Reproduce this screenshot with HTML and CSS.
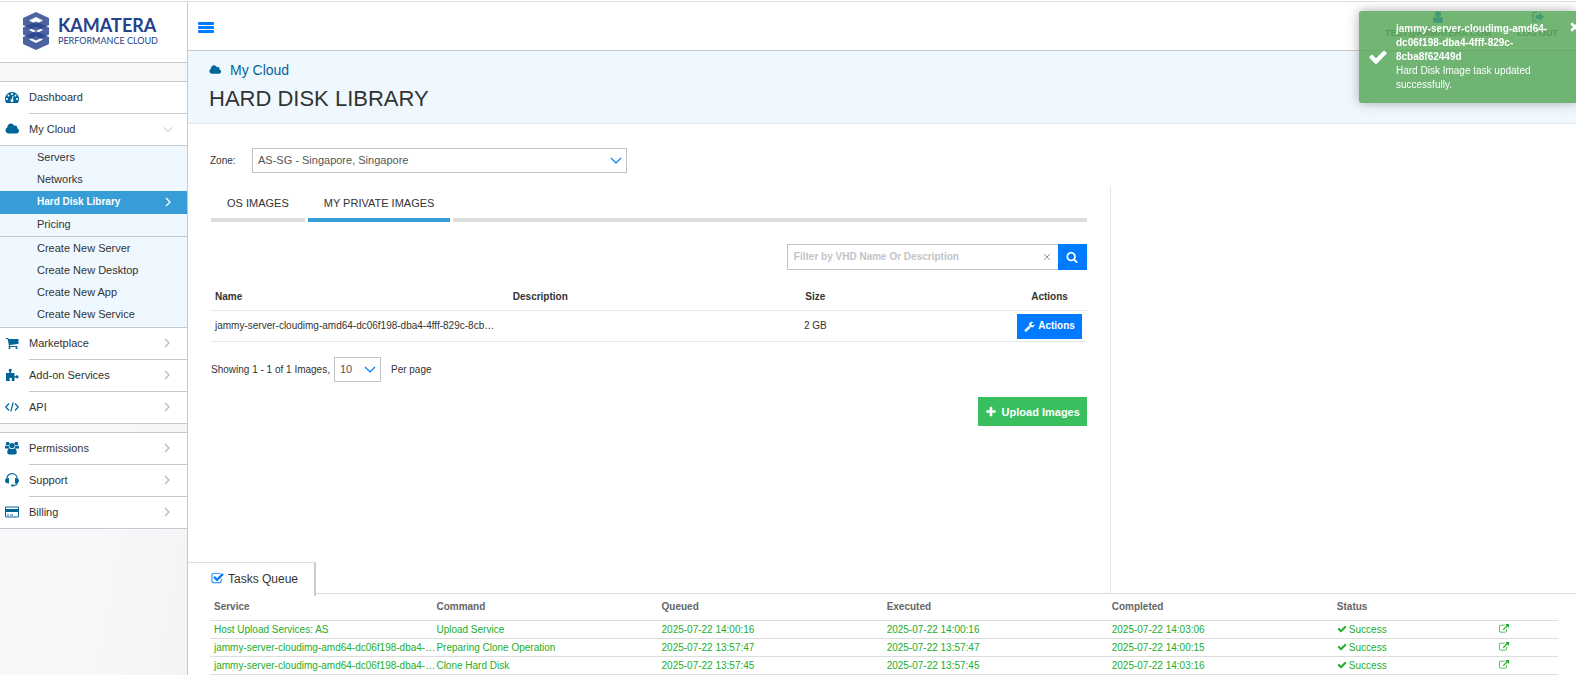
FILE: index.html
```
<!doctype html>
<html lang="en">

<head>
	<meta charset="utf-8">
	<title>Hard Disk Library</title>
	<meta name="viewport" content="width=device-width, initial-scale=1">
	<link rel="stylesheet" href="styles.css">
</head>

<body>
	<!-- shared icons -->
	<svg class="sprite" aria-hidden="true">
		<symbol id="i-cloud" viewBox="0 0 1984 1792"><path d="M1984 1152q0 159-112.500 271.500t-271.500 112.500h-1088q-185 0-316.500-131.500t-131.500-316.500q0-132 71-241.500t187-163.500q-2-28-2-43 0-212 150-362t362-150q158 0 286.500 88t187.500 230q70-62 166-62 106 0 181 75t75 181q0 75-41 138 129 30 213 134.500t84 239.500z"/></symbol>
		<symbol id="i-check" viewBox="0 0 1792 1792"><path d="M1671 566q0 40-28 68l-724 724-136 136q-28 28-68 28t-68-28l-136-136-362-362q-28-28-28-68t28-68l136-136q28-28 68-28t68 28l294 295 656-657q28-28 68-28t68 28l136 136q28 28 28 68z"/></symbol>
		<symbol id="i-external" viewBox="0 0 1792 1792"><path d="M1408 928v320q0 119-84.500 203.500t-203.500 84.500h-832q-119 0-203.500-84.500t-84.500-203.500v-832q0-119 84.500-203.500t203.500-84.500h704q14 0 23 9t9 23v64q0 14-9 23t-23 9h-704q-66 0-113 47t-47 113v832q0 66 47 113t113 47h832q66 0 113-47t47-113v-320q0-14 9-23t23-9h64q14 0 23 9t9 23zm384-864v512q0 26-19 45t-45 19-45-19l-176-176-652 652q-10 10-23 10t-23-10l-114-114q-10-10-10-23t10-23l652-652-176-176q-19-19-19-45t19-45 45-19h512q26 0 45 19t19 45z"/></symbol>
		<symbol id="i-right" viewBox="0 0 6 10"><path d="M1 1l4 4-4 4" fill="none" stroke="currentColor" stroke-width="1.300"/></symbol>
		<symbol id="i-down" viewBox="0 0 12 7"><path d="M1 1l5 5 5-5" fill="none" stroke="currentColor" stroke-width="1.200"/></symbol>
	</svg>

	<div class="app">
		<aside class="sidebar">
			<a class="logo" href="#">
				<svg width="26" height="38" viewBox="0 0 26 38" fill="#24418c" fill-rule="evenodd" fill-opacity=".82">
					<path d="M13 0l13 6v7l-13 6L0 13V6zM13 5L6 8.500l7 3.500 7-3.500z"/>
					<path d="M13 9.500l13 6v7l-13 6-13-6v-7zM13 14.500L6 18l7 3.500 7-3.500z"/>
					<path d="M13 19l13 6v7l-13 6-13-6v-7zM13 24l-7 3.500 7 3.500 7-3.500z"/>
				</svg>
				<span class="logo-text">
					<span class="logo-name">KAMATERA</span>
					<span class="logo-sub">PERFORMANCE CLOUD</span>
				</span>
			</a>

			<nav class="menu">
				<ul class="menu-group">
					<li><a href="#">
						<svg class="icon" viewBox="0 0 1792 1792"><path d="M384 1152q0-53-37.500-90.500t-90.500-37.500-90.500 37.500-37.500 90.500 37.500 90.500 90.500 37.500 90.500-37.500 37.500-90.500zm192-448q0-53-37.500-90.500t-90.500-37.500-90.500 37.500-37.500 90.500 37.500 90.500 90.500 37.500 90.500-37.500 37.500-90.500zm428 481l101-382q6-26-7.500-48.500t-38.500-29.500-48 6.500-30 39.500l-101 382q-60 5-107 43.500t-63 98.500q-20 77 20 146t117 89 146-20 89-117q16-60-6-117t-72-91zm660-33q0-53-37.500-90.500t-90.500-37.500-90.500 37.500-37.500 90.500 37.500 90.500 90.500 37.500 90.500-37.500 37.500-90.500zm-640-640q0-53-37.500-90.500t-90.500-37.500-90.500 37.500-37.500 90.500 37.500 90.500 90.500 37.500 90.500-37.500 37.500-90.500zm448 192q0-53-37.500-90.500t-90.500-37.500-90.500 37.500-37.500 90.500 37.500 90.500 90.500 37.500 90.500-37.500 37.500-90.500zm320 448q0 261-141 483-19 29-54 29h-1402q-35 0-54-29-141-221-141-483 0-182 71-348t191-286 286-191 348-71 348 71 286 191 191 286 71 348z"/></svg>
						<span class="menu-label">Dashboard</span>
					</a></li>
					<li><a href="#">
						<svg class="icon"><use href="#i-cloud"/></svg>
						<span class="menu-label">My Cloud <svg class="chev-down"><use href="#i-down"/></svg></span>
					</a></li>
				</ul>
				<ul class="submenu">
					<li><a href="#">Servers</a></li>
					<li><a href="#">Networks</a></li>
					<li><a class="active" href="#">Hard Disk Library <svg class="chev"><use href="#i-right"/></svg></a></li>
					<li><a href="#">Pricing</a></li>
				</ul>
				<ul class="submenu submenu-last">
					<li><a href="#">Create New Server</a></li>
					<li><a href="#">Create New Desktop</a></li>
					<li><a href="#">Create New App</a></li>
					<li><a href="#">Create New Service</a></li>
				</ul>
				<ul class="menu-group">
					<li><a href="#">
						<svg class="icon" viewBox="0 0 1792 1792"><path d="M704 1536q0 52-38 90t-90 38-90-38-38-90 38-90 90-38 90 38 38 90zm896 0q0 52-38 90t-90 38-90-38-38-90 38-90 90-38 90 38 38 90zm128-1088v512q0 24-16.500 42.500t-40.500 21.500l-1044 122q13 60 13 70 0 16-24 64h920q26 0 45 19t19 45-19 45-45 19h-1024q-26 0-45-19t-19-45q0-11 8-31.500t16-36 21.500-40 15.500-29.500l-177-823h-204q-26 0-45-19t-19-45 19-45 45-19h256q16 0 28.500 6.500t19.500 15.500 13 24.500 8 26 5.500 29.500 4.500 26h1201q26 0 45 19t19 45z"/></svg>
						<span class="menu-label">Marketplace <svg class="chev"><use href="#i-right"/></svg></span>
					</a></li>
					<li><a href="#">
						<svg class="icon" viewBox="0 0 14 14"><path d="M1 5h3.500V4C3.200 3 3.400.8 5.200.8S7.200 3 6 4v1h3.500v3.200h1c.8-1.500 3-1.200 3 .6s-2.200 2-3 .7h-1V13H6.600v-1c.8-1.200.3-2.200-.9-2.200s-1.700 1-.9 2.200v1H1z"/></svg>
						<span class="menu-label">Add-on Services <svg class="chev"><use href="#i-right"/></svg></span>
					</a></li>
					<li><a href="#">
						<svg class="icon" viewBox="0 0 14 14"><path d="M4 3.500L.8 7 4 10.500M10 3.500L13.200 7 10 10.500M8.200 2.500l-2.400 9" fill="none" stroke="currentColor" stroke-width="1.200"/></svg>
						<span class="menu-label">API <svg class="chev"><use href="#i-right"/></svg></span>
					</a></li>
				</ul>
				<ul class="menu-group menu-account">
					<li><a href="#">
						<svg class="icon" viewBox="0 0 14 14"><circle cx="2.700" cy="2.600" r="1.900"/><circle cx="11.300" cy="2.600" r="1.900"/><circle cx="7" cy="4.600" r="2.700"/><path d="M0 7.500V6.200C0 5 .6 4.400 1.400 4.700c.8.500 1.600.5 2.300.1 0 1 .3 2 .8 2.700zM14 7.500V6.200c0-1.200-.6-1.800-1.400-1.500-.8.500-1.600.5-2.300.1 0 1-.3 2-.8 2.700zM2.300 11.500c0-2.500.7-4 2.300-4.300 1.500 1.200 3.300 1.200 4.800 0 1.600.3 2.300 1.800 2.300 4.300 0 1.300-.7 2-1.700 2H4c-1 0-1.700-.7-1.700-2z"/></svg>
						<span class="menu-label">Permissions <svg class="chev"><use href="#i-right"/></svg></span>
					</a></li>
					<li><a href="#">
						<svg class="icon" viewBox="0 0 14 14"><path d="M1.700 9V6c0-3 2.300-5.300 5.300-5.300s5.300 2.300 5.300 5.300v3c0 2-1.500 3.500-4 3.500" fill="none" stroke="currentColor" stroke-width="1.200"/><path d="M4 5v5.500C1.500 10.500 0 9.500 0 7.700S1.500 5 4 5zM10 5v5.500c2.500 0 4-1 4-2.800S12.500 5 10 5z"/><rect x="6" y="11.500" width="3" height="2" rx="1"/></svg>
						<span class="menu-label">Support <svg class="chev"><use href="#i-right"/></svg></span>
					</a></li>
					<li><a href="#">
						<svg class="icon" viewBox="0 0 14 14"><path d="M1.200 1.500h11.600c.7 0 1.200.5 1.200 1.200v8.600c0 .7-.5 1.200-1.200 1.200H1.200c-.7 0-1.200-.5-1.200-1.200V2.700c0-.7.500-1.200 1.200-1.200zM1 2.500v1.500h12V2.500zM1 7v4.500h12V7zM2 9.600h2v1H2zM5 9.600h3v1H5z" fill-rule="evenodd"/></svg>
						<span class="menu-label">Billing <svg class="chev"><use href="#i-right"/></svg></span>
					</a></li>
				</ul>
			</nav>
		</aside>

		<main class="main">
			<header class="topbar">
				<button class="burger" aria-label="Toggle menu"><i></i><i></i><i></i></button>
				<div class="user-links">
					<a href="#">
						<svg viewBox="0 0 12 12"><circle cx="6" cy="3.200" r="3"/><path d="M1 9.500c0-2.300.8-3.700 2.400-3.800 1.600 1.300 3.600 1.300 5.200 0C10.200 5.800 11 7.200 11 9.500c0 1.500-.8 2.300-2 2.300H3c-1.200 0-2-.8-2-2.300z"/></svg>
						TEST@KAMATERA.COM
					</a>
					<a href="#">
						<svg viewBox="0 0 12 12"><path d="M5 1.500H2.500C1.600 1.500 1 2.100 1 3v6c0 .9.600 1.500 1.500 1.500H5" fill="none" stroke="currentColor" stroke-width="1.200"/><path d="M3.500 4.300h3.700V1.600L12 6l-4.800 4.400V7.700H3.500z"/></svg>
						LOG OUT
					</a>
				</div>
			</header>

			<div class="banner">
				<a class="crumb" href="#"><svg><use href="#i-cloud"/></svg>My Cloud</a>
				<h1>HARD DISK LIBRARY</h1>
			</div>

			<div class="zone">
				<label for="zone">Zone:</label>
				<div class="select">
					<select id="zone"><option>AS-SG - Singapore, Singapore</option></select>
					<svg><use href="#i-down"/></svg>
				</div>
			</div>

			<div class="content">
				<section class="library">
					<nav class="tabs">
						<a href="#">OS IMAGES</a>
						<a class="active" href="#">MY PRIVATE IMAGES</a>
					</nav>

					<form class="search">
						<input type="text" aria-label="Filter" placeholder="Filter by VHD Name Or Description">
						<button class="clear" type="reset" aria-label="Clear"><svg viewBox="0 0 8 8"><path d="M1 1l6 6M7 1L1 7" fill="none" stroke="currentColor"/></svg></button>
						<button class="go" type="button" aria-label="Search"><svg viewBox="0 0 1792 1792"><path d="M1216 832q0-185-131.500-316.500t-316.500-131.500-316.500 131.500-131.500 316.500 131.500 316.500 316.500 131.500 316.500-131.500 131.500-316.500zm512 832q0 52-38 90t-90 38q-54 0-90-38l-343-342q-179 124-399 124-143 0-273.500-55.500t-225-150-150-225-55.500-273.500 55.500-273.500 150-225 225-150 273.500-55.500 273.500 55.500 225 150 150 225 55.500 273.500q0 220-124 399l343 343q37 37 37 90z"/></svg></button>
					</form>

					<table class="images">
						<thead>
							<tr>
								<th>Name</th>
								<th>Description</th>
								<th>Size</th>
								<th>Actions</th>
							</tr>
						</thead>
						<tbody>
							<tr>
								<td>jammy-server-cloudimg-amd64-dc06f198-dba4-4fff-829c-8cb…</td>
								<td></td>
								<td>2 GB</td>
								<td><button class="btn"><svg viewBox="0 0 1792 1792"><path d="M448 1472q0-26-19-45t-45-19-45 19-19 45 19 45 45 19 45-19 19-45zm644-420l-682 682q-37 37-90 37-52 0-91-37l-106-108q-38-36-38-90 0-53 38-91l681-681q39 98 114.500 173.500t173.500 114.500zm634-435q0 39-23 106-47 134-164.500 217.500t-258.500 83.500q-185 0-316.500-131.500t-131.500-316.500 131.500-316.500 316.500-131.500q58 0 121.500 16.500t107.500 46.500q16 11 16 28t-16 28l-293 169v224l193 107q5-3 79-48.500t135.500-81 70.500-35.500q15 0 23.500 10t8.500 25z"/></svg>Actions</button></td>
							</tr>
						</tbody>
					</table>

					<div class="pager">
						<span>Showing 1 - 1 of 1 Images,</span>
						<div class="select">
							<select id="perpage"><option>10</option></select>
							<svg><use href="#i-down"/></svg>
						</div>
						<label for="perpage">Per page</label>
					</div>

					<button class="btn upload"><svg viewBox="0 0 1792 1792"><path d="M1600 736v192q0 40-28 68t-68 28h-416v416q0 40-28 68t-68 28h-192q-40 0-68-28t-28-68v-416h-416q-40 0-68-28t-28-68v-192q0-40 28-68t68-28h416v-416q0-40 28-68t68-28h192q40 0 68 28t28 68v416h416q40 0 68 28t28 68z"/></svg>Upload Images</button>
				</section>
			</div>

			<section class="tasks">
				<h2><svg viewBox="0 0 1792 1792"><path d="M1472 930v318q0 119-84.500 203.500t-203.500 84.500h-832q-119 0-203.500-84.500t-84.500-203.500v-832q0-119 84.500-203.500t203.500-84.500h832q63 0 117 25 15 7 18 23 3 17-9 29l-49 49q-10 10-23 10-3 0-9-2-23-6-45-6h-832q-66 0-113 47t-47 113v832q0 66 47 113t113 47h832q66 0 113-47t47-113v-254q0-13 9-22l64-64q10-10 23-10 6 0 12 3 20 8 20 29zm231-489l-814 814q-24 24-57 24t-57-24l-430-430q-24-24-24-57t24-57l110-110q24-24 57-24t57 24l263 263 647-647q24-24 57-24t57 24l110 110q24 24 24 57t-24 57z"/></svg>Tasks Queue</h2>
				<div class="tasks-body">
					<table>
						<thead>
							<tr>
								<th>Service</th>
								<th>Command</th>
								<th>Queued</th>
								<th>Executed</th>
								<th>Completed</th>
								<th>Status</th>
								<th></th>
							</tr>
						</thead>
						<tbody>
							<tr>
								<td>Host Upload Services: AS</td>
								<td>Upload Service</td>
								<td>2025-07-22 14:00:16</td>
								<td>2025-07-22 14:00:16</td>
								<td>2025-07-22 14:03:06</td>
								<td><svg><use href="#i-check"/></svg>Success</td>
								<td><a href="#" aria-label="Open"><svg><use href="#i-external"/></svg></a></td>
							</tr>
							<tr>
								<td>jammy-server-cloudimg-amd64-dc06f198-dba4-…</td>
								<td>Preparing Clone Operation</td>
								<td>2025-07-22 13:57:47</td>
								<td>2025-07-22 13:57:47</td>
								<td>2025-07-22 14:00:15</td>
								<td><svg><use href="#i-check"/></svg>Success</td>
								<td><a href="#" aria-label="Open"><svg><use href="#i-external"/></svg></a></td>
							</tr>
							<tr>
								<td>jammy-server-cloudimg-amd64-dc06f198-dba4-…</td>
								<td>Clone Hard Disk</td>
								<td>2025-07-22 13:57:45</td>
								<td>2025-07-22 13:57:45</td>
								<td>2025-07-22 14:03:16</td>
								<td><svg><use href="#i-check"/></svg>Success</td>
								<td><a href="#" aria-label="Open"><svg><use href="#i-external"/></svg></a></td>
							</tr>
						</tbody>
					</table>
				</div>
			</section>
		</main>
	</div>

	<div class="toast" role="status">
		<svg class="toast-icon"><use href="#i-check"/></svg>
		<div>
			<strong>jammy-server-cloudimg-amd64-dc06f198-dba4-4fff-829c-8cba8f62449d</strong>
			<p>Hard Disk Image task updated successfully.</p>
		</div>
		<button aria-label="Close"><svg viewBox="0 0 8 8"><path d="M1 1l6 6M7 1L1 7" fill="none" stroke="currentColor" stroke-width="2"/></svg></button>
	</div>
</body>
</html>
```

FILE: styles.css
```
*, *:after, *:before{
	box-sizing: border-box;
}

html, body{
	height: 100%;
	margin: 0; padding: 0;
}

body{
	font: 11px/16px "Liberation Sans", Arial, sans-serif;
	color: #333;
	background-color: #fff;
	padding-top: 1px;
	overflow: hidden;
}

ul, h1, h2, p{
	margin: 0; padding: 0;
	list-style: none;
	font-weight: normal;
}

a{
	color: inherit;
	text-decoration: none;
}

svg{
	fill: currentColor;
	flex: none;
}

button, input, select{
	font: inherit;
	color: inherit;
	margin: 0;
	border: 0;
	border-radius: 0;
}

button{
	cursor: pointer;
}

.sprite{
	display: none;
}

.app{
	display: flex;
	height: 100%;
	border-top: 1px solid #e0e0e0;
}

/* sidebar */
.sidebar{
	flex: none;
	width: 188px;
	border-right: 1px solid #c7c7ce;
	background: linear-gradient(100deg, #f8f8fa 60%, #f4f4f6);
}

.logo{
	display: flex;
	align-items: center;
	gap: 9px;
	height: 61px;
	padding: 0 0 2px 23px;
	background-color: #fff;
	border-bottom: 1px solid #c7c7ce;
	color: #24418c;
	font-family: Lato, sans-serif;
}

.logo svg{
	fill: #24418c;
}

.logo-text{
	display: flex;
	flex-direction: column;
}

.logo-name{
	font-size: 18px;
	line-height: 20px;
	font-weight: bold;
}

.logo-sub{
	font-size: 9px;
	line-height: 12px;
}

.menu{
	margin-top: 18px;
}

.menu-group{
	background-color: #fff;
	border-top: 1px solid #c7c7ce;
}

.menu-group li:last-child{
	border-bottom: 1px solid #c7c7ce;
}

.menu-group a{
	display: flex;
	align-items: center;
	gap: 10px;
	height: 31px;
	padding-left: 5px;
}

.menu-group li:not(:last-child) a{
	height: 32px;
}

.menu-group li:not(:last-child) .menu-label{
	border-bottom: 1px solid #c7c7ce;
}

.icon{
	width: 14px;
	height: 14px;
	margin-bottom: 2px;
	color: #069;
}

.menu-label{
	flex: 1;
	display: flex;
	align-items: center;
	justify-content: space-between;
	height: 100%;
	padding: 0 17px 1px 0;
}

.chev{
	width: 6px;
	height: 10px;
	color: #b8b8c0;
}

.chev-down{
	width: 10px;
	height: 7px;
	color: #b8b8c0;
	margin-right: -3px;
}

.submenu{
	background-color: #f0f8ff;
	border-bottom: 1px solid #c7c7ce;
	padding-top: 1px;
}

.submenu-last{
	padding-bottom: 1px;
	margin-bottom: -1px;
}

.submenu a{
	display: flex;
	align-items: center;
	justify-content: space-between;
	height: 22px;
	padding: 0 16px 2px 37px;
}

.submenu .active{
	height: 23px;
	background-color: #369dd7;
	color: #fff;
	font-size: 10px;
	font-weight: bold;
}

.submenu .active .chev{
	color: #fff;
}

.menu-account{
	margin-top: 8px;
}

/* page */
.main{
	flex: 1;
	min-width: 0;
	display: flex;
	flex-direction: column;
}

.topbar{
	display: flex;
	justify-content: space-between;
	height: 49px;
	padding: 0 18px 0 10px;
	border-bottom: 1px solid #c7c7ce;
}

.burger{
	display: flex;
	flex-direction: column;
	justify-content: center;
	gap: 1px;
	padding: 2px 0 0;
	background: none;
}

.burger i{
	width: 16px;
	height: 3px;
	border-radius: 1px;
	background-color: #007bff;
}

.user-links{
	display: flex;
	gap: 26px;
	padding-top: 9px;
	font-size: 9px;
	font-weight: bold;
	color: #777;
}

.user-links a{
	display: flex;
	flex-direction: column;
	align-items: center;
}

.user-links svg{
	width: 12px;
	height: 12px;
	margin-bottom: 2px;
	color: #007bff;
}

.banner{
	height: 73px;
	padding: 11px 21px 0;
	background-color: #f0f8ff;
	border-bottom: 1px solid #e4e9ee;
}

.crumb{
	display: inline-flex;
	align-items: center;
	gap: 9px;
	color: #069;
	font-size: 14px;
}

.crumb svg{
	width: 12px;
	height: 12px;
}

h1{
	margin-top: 6px;
	font-size: 22px;
	line-height: 26px;
}

.zone{
	display: flex;
	align-items: center;
	padding: 24px 22px 14px;
	font-size: 10px;
}

.zone label{
	width: 42px;
}

.zone .select{
	width: 375px;
	font-size: 11px;
}

.select{
	position: relative;
	height: 25px;
}

.select select{
	width: 100%;
	height: 100%;
	padding: 0 5px 1px;
	appearance: none;
	border: 1px solid #c2c2cb;
	background-color: #fff;
	color: #555;
}

.select svg{
	position: absolute;
	right: 5px;
	top: 9px;
	width: 12px;
	height: 7px;
	color: #007bff;
	pointer-events: none;
}

.content{
	flex: 1;
	min-height: 0;
	display: grid;
	grid-template-columns: 1984fr 1000fr;
}

.library{
	padding: 0 23px;
	border-right: 1px solid #e4e4e8;
}

.tabs{
	display: flex;
	gap: 3px;
	height: 35px;
}

.tabs a, .tabs:after{
	padding: 8px 16px 0;
	border-bottom: 4px solid #ddd;
}

.tabs a{
	white-space: nowrap;
}

.tabs .active{
	border-color: #369dd7;
}

.tabs:after{
	content: "";
	flex: 1;
}

.search{
	display: flex;
	width: 300px;
	height: 26px;
	margin: 22px 0 13px auto;
}

.search input{
	flex: 1;
	min-width: 0;
	padding: 0 6px;
	border: 1px solid #c2c2cb;
	border-right: 0;
	font-size: 10px;
	font-weight: bold;
}

.search input::placeholder{
	color: #c3c3ca;
}

.clear{
	display: flex;
	align-items: center;
	padding: 0 7px;
	border: solid #c2c2cb;
	border-width: 1px 0;
	background-color: #fff;
	color: #999;
}

.clear svg{
	width: 8px;
	height: 8px;
}

.go{
	display: flex;
	align-items: center;
	justify-content: center;
	width: 29px;
	padding: 0;
	background-color: #007bff;
	color: #fff;
}

.go svg{
	width: 12px;
	height: 12px;
}

table{
	width: 100%;
	table-layout: fixed;
	border-spacing: 0;
	font-size: 10px;
}

th, td{
	padding: 0 4px;
	border-bottom: 1px solid #ddd;
	text-align: left;
	white-space: nowrap;
}

.images th, .images td{
	height: 31px;
	border-color: #e6e6e6;
}

.images th{
	height: 28px;
}

.images th:nth-child(1){
	width: 34%;
}

.images th:nth-child(2){
	width: 30%;
}

.images th:nth-child(3){
	width: 10%;
}

.images tr > :nth-child(3){
	text-align: center;
}

.images tr > :last-child{
	padding-right: 5px;
	text-align: right;
}

.images thead tr > :last-child{
	padding-right: 19px;
}

.btn{
	display: inline-flex;
	align-items: center;
	gap: 3px;
	height: 25px;
	padding: 0 7px;
	background-color: #007bff;
	color: #fff;
	font-size: 10px;
	font-weight: bold;
	vertical-align: middle;
}

.btn svg{
	width: 11px;
	height: 11px;
}

.pager{
	display: flex;
	align-items: center;
	gap: 4px;
	margin-top: 15px;
	font-size: 10px;
}

.pager .select{
	width: 47px;
	font-size: 11px;
}

.pager label{
	margin-left: 6px;
}

.upload{
	display: flex;
	gap: 5px;
	height: 29px;
	margin: 15px 0 0 auto;
	background-color: #3abf5e;
	font-size: 11px;
}

.upload svg{
	width: 12px;
	height: 12px;
}

/* tasks queue, its tab hangs over the content above */
.tasks h2{
	position: relative;
	display: flex;
	align-items: center;
	gap: 4px;
	width: max-content;
	height: 34px;
	margin: -31px 0 -3px;
	padding: 0 16px 2px 23px;
	border-top: 1px solid #ddd;
	border-right: 2px solid #ccc;
	background-color: #fff;
	font-size: 12px;
}

.tasks h2 svg{
	width: 13px;
	height: 13px;
	color: #007bff;
}

.tasks-body{
	padding: 0 18px 0 22px;
	border-top: 1px solid #ddd;
}

.tasks th{
	height: 27px;
	color: #666;
	width: 16.7%;
}

.tasks th:first-child{
	width: 16.5%;
}

.tasks th:nth-child(6){
	width: 12%;
}

.tasks th:last-child{
	width: auto;
}

.tasks td{
	height: 18px;
	line-height: 17px;
	color: #22ad2b;
}

.tasks td svg{
	width: 10px;
	height: 10px;
	margin-right: 2px;
	vertical-align: -1px;
}

/* notification */
.toast{
	position: fixed;
	top: 11px;
	right: 0;
	width: 217px;
	display: flex;
	align-items: center;
	gap: 8px;
	padding: 11px 24px 11px 9px;
	border-radius: 3px 0 0 3px;
	background-color: #51a351;
	box-shadow: 0 0 12px #999;
	color: #fff;
	font-size: 10px;
	line-height: 14px;
	opacity: .8;
}

.toast-icon{
	width: 20px;
	height: 20px;
}

.toast button{
	position: absolute;
	top: 11px;
	right: -4px;
	padding: 0;
	background: none;
	color: #fff;
}

.toast button svg{
	display: block;
	width: 10px;
	height: 10px;
}
```
